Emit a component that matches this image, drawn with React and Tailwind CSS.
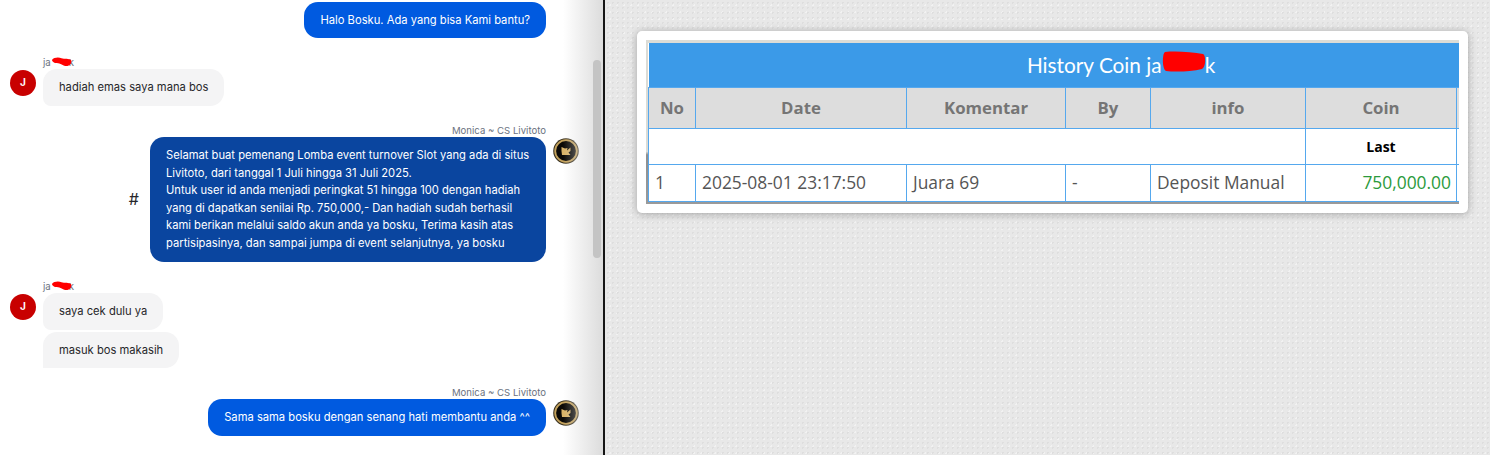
const Blob = ({ className }) => (
  <svg className={className} viewBox="0 0 22 10" fill="none">
    <path d="M1 3 C 3 0, 8 0, 11 1 C 14 2, 19 1, 21 3 C 22 5, 21 8, 18 9 C 15 10, 13 8, 10 7 C 7 6, 2 7, 1 3 Z" fill="#ff0000" />
  </svg>
);

const CsAvatar = ({ className = "" }) => (
  <svg className={`w-[26px] h-[26px] shrink-0 ${className}`} viewBox="0 0 26 26">
    <circle cx="13" cy="13" r="12.8" fill="#3a3220" />
    <circle cx="13" cy="13" r="10.8" fill="#0b0906" stroke="#c4a25c" strokeWidth="1.8" />
    <path d="M8.5 9 L12 10.5 L14.5 10 L14 12.5 L17.5 9.5 L17.5 13 L15.5 14.5 L17.5 17 L9 17 L8.5 13 Z" fill="#d9b368" />
  </svg>
);

const UserAvatar = () => (
  <div className="w-[26px] h-[26px] shrink-0 rounded-full bg-[#c80000] text-white text-[10px] font-bold flex items-center justify-center">
    J
  </div>
);

const UserName = () => (
  <div className="h-[13px] text-[9.6px] leading-[13px] text-[#6b7280] w-fit">
    ja
    <span className="relative inline-block w-[18px] h-[9px]">
      <Blob className="absolute left-0 top-0 w-[21px] h-[10px]" />
    </span>
    k
  </div>
);

const UserGroup = ({ messages }) => (
  <div className="flex gap-[7px] pl-[10px] mt-[18px]">
    <div className="pt-[14px]">
      <UserAvatar />
    </div>
    <div className="flex flex-col items-start">
      <UserName />
      <div className="flex flex-col items-start gap-[2px]">
        {messages.map((text, i) => (
          <div
            key={i}
            className={`bg-[#f4f4f5] text-[#27272a] px-4 pt-[10px] pb-[9.2px] rounded-[14px] ${i === messages.length - 1 && messages.length > 1 ? "rounded-bl-none" : "rounded-bl-[8px]"}`}
          >
            {text}
          </div>
        ))}
      </div>
    </div>
  </div>
);

const CsGroup = ({ children, dark, mark }) => (
  <div className="flex flex-col items-end pr-[57px] mt-[18px]">
    <div className="h-[13px] text-[9.6px] leading-[13px] text-[#6b7280]">Monica ~ CS Livitoto</div>
    <div className="relative flex items-center">
      {mark && <span className="mr-[11px] text-base text-[#27272a]">#</span>}
      <div className={`text-white px-4 pt-[10px] pb-[9.2px] rounded-[14px] ${dark ? "bg-[#0a459f] w-[396px]" : "bg-[#005ae0]"}`}>
        {children}
      </div>
      <CsAvatar className="absolute top-px -right-[33px]" />
    </div>
  </div>
);

const thClass = "border border-[#55a8ee] bg-[#dddddd] text-[#757575] font-bold text-[16.8px] h-[41px]";
const tdClass = "border border-[#55a8ee] text-[#555555] text-[17.4px] px-[6px] h-[37px]";

export default function App() {
  return (
    <div className="flex w-[1490px] h-[455px] overflow-hidden font-['Inter',sans-serif]">
      {/* chat */}
      <div className="relative w-[603px] h-full shrink-0 bg-white text-[11.2px] leading-[17.6px] overflow-hidden">
        <div className="flex justify-end pr-[57px] pt-[1.5px]">
          <div className="bg-[#005ae0] text-white px-4 pt-[10px] pb-[9.2px] rounded-[14px]">Halo Bosku. Ada yang bisa Kami bantu?</div>
        </div>

        <UserGroup messages={["hadiah emas saya mana bos"]} />

        <CsGroup dark mark>
          Selamat buat pemenang Lomba event turnover Slot yang ada di situs Livitoto, dari tanggal 1 Juli hingga 31 Juli 2025.
          <br />
          Untuk user id anda menjadi peringkat 51 hingga 100 dengan hadiah yang di dapatkan senilai Rp. 750,000,- Dan hadiah sudah berhasil kami berikan melalui saldo akun anda ya bosku, Terima kasih atas partisipasinya, dan sampai jumpa di event selanjutnya, ya bosku
        </CsGroup>

        <UserGroup messages={["saya cek dulu ya", "masuk bos makasih"]} />

        <CsGroup>Sama sama bosku dengan senang hati membantu anda ^^</CsGroup>

        {/* edge shade and scrollbar */}
        <div className="absolute top-0 right-0 h-full w-[40px] bg-gradient-to-r from-transparent to-[#dcdcdc] pointer-events-none" />
        <div className="absolute top-[60px] right-[2px] w-[8px] h-[198px] rounded-full bg-[#c4c4c4]" />
      </div>

      <div className="w-[2px] shrink-0 bg-[#141414]" />

      {/* coin history */}
      <div className="flex-1 h-full pt-[31px] pl-[32px] bg-[#e8e8e8] bg-[radial-gradient(#dedede_1px,transparent_1px),radial-gradient(#f2f2f2_1px,transparent_1px)] bg-[length:5px_5px,7px_7px] bg-[position:0_0,2px_2px]">
        <div className="w-[831px] h-[182px] p-[9px] bg-white rounded-[5px] shadow-[0_1px_8px_rgba(0,0,0,0.3)]">
          <div className="w-[813px] h-[164px] overflow-hidden pl-[2px] pt-[3px] bg-[linear-gradient(180deg,#dcdcd6_0%,#dcdcd6_68%,#8f8f8f_70%,#9a9a9a_100%)] font-['Open_Sans',sans-serif]">
            <table className="w-[945px] max-w-none table-fixed border-collapse bg-white">
              <colgroup>
                <col className="w-[47px]" />
                <col className="w-[211px]" />
                <col className="w-[159px]" />
                <col className="w-[85px]" />
                <col className="w-[155px]" />
                <col className="w-[151px]" />
                <col className="w-[137px]" />
              </colgroup>
              <thead>
                <tr>
                  <th colSpan={7} className="h-[44px] bg-[#3b9ae8] text-white font-normal font-['Lato',sans-serif] text-[20.8px]">
                    History Coin ja
                    <span className="relative inline-block w-[43px] h-[20px]">
                      <svg className="absolute left-0 -top-[2px] w-[44px] h-[21px]" viewBox="0 0 44 21">
                        <path d="M3 1 C 14 0, 30 1, 41 3 C 44 4, 44 16, 40 18 C 28 21, 12 21, 4 20 C 0 18, 0 3, 3 1 Z" fill="#ff0000" />
                      </svg>
                    </span>
                    k
                  </th>
                </tr>
                <tr>
                  <th className={thClass}>No</th>
                  <th className={thClass}>Date</th>
                  <th className={thClass}>Komentar</th>
                  <th className={thClass}>By</th>
                  <th className={thClass}>info</th>
                  <th className={thClass}>Coin</th>
                  <th className={thClass}></th>
                </tr>
              </thead>
              <tbody>
                <tr>
                  <td colSpan={5} className="border border-[#55a8ee] h-[36px]"></td>
                  <td className="border border-[#55a8ee] text-center text-black font-bold text-[14px]">Last</td>
                  <td className="border border-[#55a8ee]"></td>
                </tr>
                <tr>
                  <td className={tdClass}>1</td>
                  <td className={tdClass}>2025-08-01 23:17:50</td>
                  <td className={tdClass}>Juara 69</td>
                  <td className={tdClass}>-</td>
                  <td className={tdClass}>Deposit Manual</td>
                  <td className={`${tdClass} text-right !pr-[5px] !text-[#2b9a3c]`}>750,000.00</td>
                  <td className={tdClass}></td>
                </tr>
              </tbody>
            </table>
          </div>
        </div>
      </div>
    </div>
  );
}
